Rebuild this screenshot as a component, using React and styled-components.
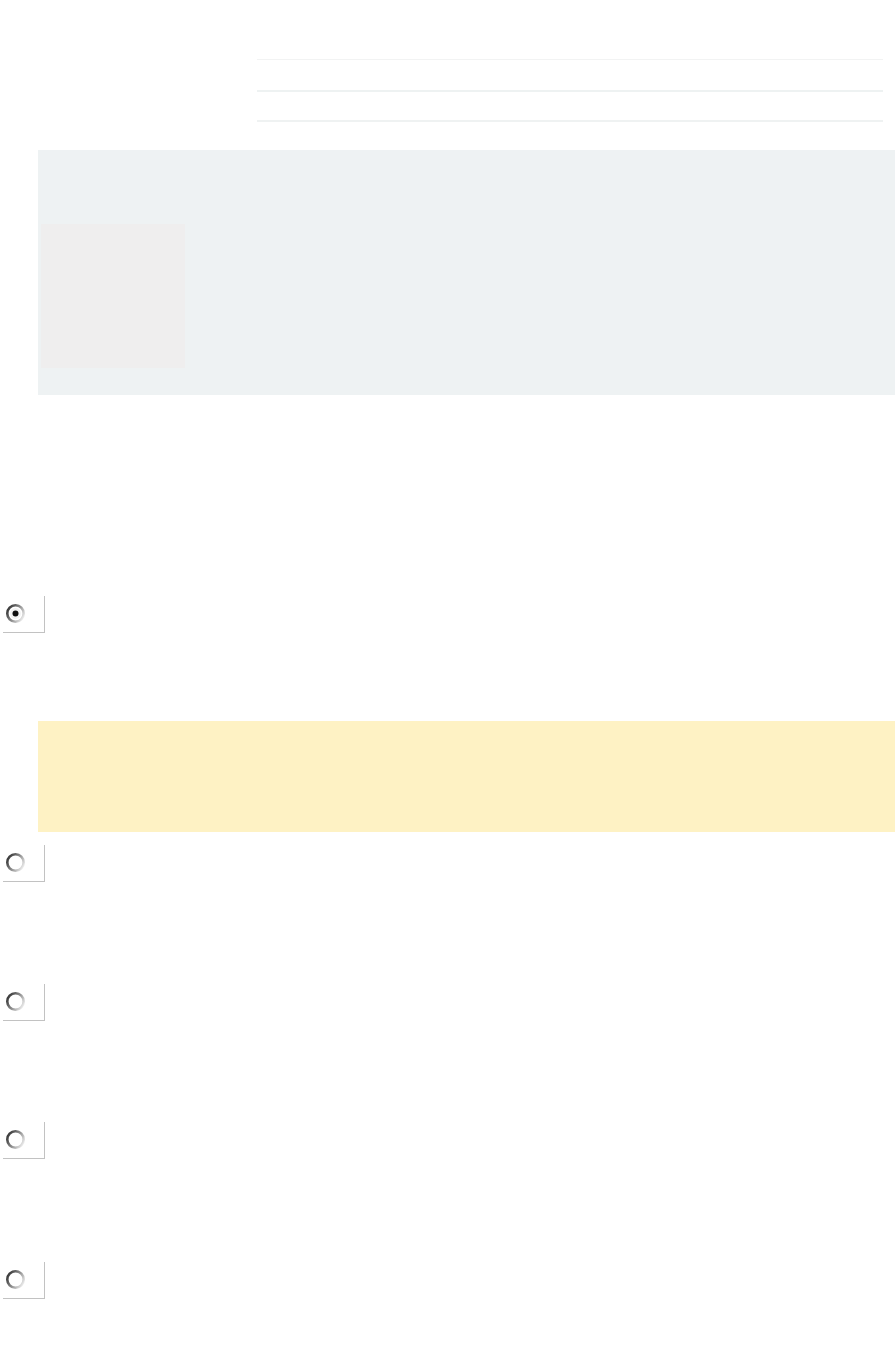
import React from "react";
import styled, { createGlobalStyle } from "styled-components";

const GlobalStyle = createGlobalStyle`
  html, body {
    margin: 0;
    padding: 0;
    background: #ffffff;
    font-family: "Liberation Sans", Arial, sans-serif;
  }
`;

const Page = styled.div`
  width: 895px;
  min-height: 1360px;
  overflow: hidden;
`;

const Header = styled.div`
  height: 150px;
  padding-left: 257px;
  box-sizing: border-box;
  display: flex;
  flex-direction: column;
`;

const Rule = styled.div`
  width: 626px;
  height: ${(p) => p.thick}px;
  background: ${(p) => p.color};
  margin-top: ${(p) => p.gap}px;
`;

const Panel = styled.section`
  margin-left: 38px;
  height: ${(p) => p.height}px;
  margin-top: ${(p) => p.top || 0}px;
  background: ${(p) => p.bg};
  box-sizing: border-box;
`;

const MediaPanel = styled(Panel)`
  padding: 74px 0 0 3px;
`;

const Thumb = styled.div`
  width: 144px;
  height: 144px;
  background: #efeeee;
`;

const ChoiceBox = styled.label`
  display: flex;
  align-items: flex-start;
  width: 42px;
  height: 37px;
  margin-top: ${(p) => p.top}px;
  margin-left: 3px;
  padding: 7px 0 0 2px;
  box-sizing: border-box;
  border-right: 1px solid #c2c2c2;
  border-bottom: 1px solid #c2c2c2;
  cursor: pointer;
`;

const Radio = ({ checked, id }) => (
  <svg width="21" height="21" viewBox="0 0 21 21">
    <defs>
      <linearGradient id={`rg${id}`} x1="0" y1="0.2" x2="1" y2="0.8">
        <stop offset="0" stopColor="#333333" />
        <stop offset="0.5" stopColor="#8c8c8c" />
        <stop offset="1" stopColor="#f0f0f0" />
      </linearGradient>
    </defs>
    <circle cx="10.5" cy="10.5" r="8.2" fill="#ffffff" stroke={`url(#rg${id})`} strokeWidth="2.6" />
    {checked && <circle cx="10.5" cy="10.5" r="5.4" fill="#f2f2f2" />}
    {checked && <circle cx="10.5" cy="10.5" r="3" fill="#0e0e0e" />}
  </svg>
);

const choices = [
  { id: 1, top: 102 },
  { id: 2, top: 101 },
  { id: 3, top: 103 },
];

export default function App() {
  return (
    <Page>
      <GlobalStyle />
      <Header>
        <Rule gap={59} thick={1} color="#f2f3f3" />
        <Rule gap={30} thick={2} color="#eef2f2" />
        <Rule gap={28} thick={2} color="#eff2f2" />
      </Header>

      <MediaPanel bg="#eef2f3" height={245}>
        <Thumb />
      </MediaPanel>

      <ChoiceBox top={201}>
        <Radio id={0} checked />
      </ChoiceBox>

      <Panel bg="#fef2c4" height={111} top={88} />

      <ChoiceBox top={13}>
        <Radio id={10} />
      </ChoiceBox>

      {choices.map((c) => (
        <ChoiceBox key={c.id} top={c.top}>
          <Radio id={c.id} />
        </ChoiceBox>
      ))}
    </Page>
  );
}
